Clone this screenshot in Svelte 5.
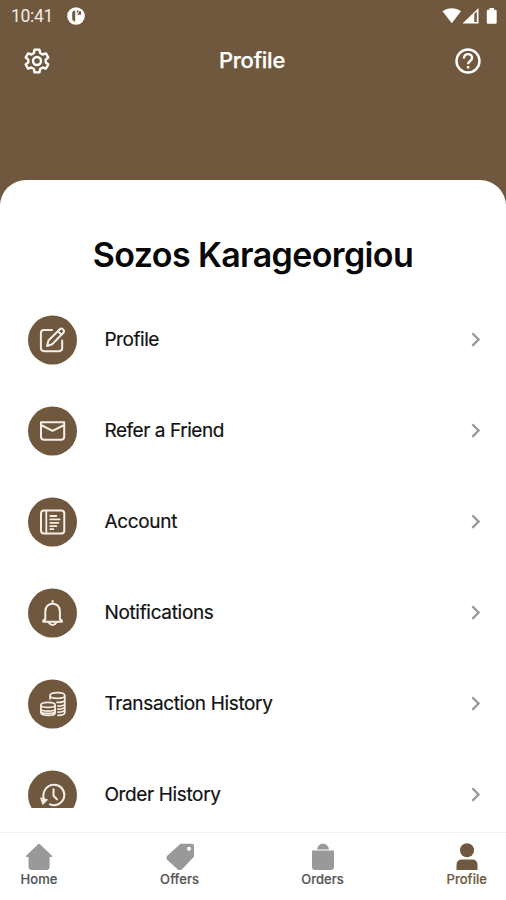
<script>
  const rows = [
    { label: 'Profile', icon: 'edit', width: 55 },
    { label: 'Refer a Friend', icon: 'mail', width: 120 },
    { label: 'Account', icon: 'account', width: 73 },
    { label: 'Notifications', icon: 'bell', width: 109.5 },
    { label: 'Transaction History', icon: 'coins', width: 168.5 },
    { label: 'Order History', icon: 'history', width: 116.5 }
  ];
  const tabs = ['Home', 'Offers', 'Orders', 'Profile'];
</script>

<div class="screen">
  <header>
    <div class="status">
      <span class="time">10:41</span>
      <svg class="app" width="18" height="18" viewBox="0 0 18 18">
        <circle cx="9" cy="9" r="8.8" fill="#fff" />
        <path d="M8.200 3.400v11.200q-3-.4-3-3V6.400q0-2.800 3-3z" fill="#70583e" />
        <path d="M9.800 3.600h1.700v1.800H9.800zM12 4.200h2v3.500h-3.300V6.200H12z" fill="#70583e" />
      </svg>
      <svg class="signals" width="56" height="18" viewBox="0 0 56 18" fill="#fff">
        <path d="M.5 4.300C6 .2 13.500 .2 19 4.300L9.800 16.200z" />
        <path fill-rule="evenodd" d="M36.500 1v15.600H20.500zM32.300 6.800v8.300h2.500V4.500z" />
        <path d="M47.500 1h4.500v1.700h1.500q1.200 0 1.200 1.200v11.600q0 1.200-1.200 1.200H46q-1.200 0-1.200-1.200V3.900q0-1.200 1.200-1.200h1.500z" />
      </svg>
    </div>
    <div class="bar">
      <svg width="26" height="26" viewBox="0 0 26 26" fill="none" stroke="#fff" stroke-width="2.400" stroke-linejoin="round">
        <path d="M10.600 1.600h4.800l.7 3.400 2.500 1.500 3.300-1.100 2.400 4.100-2.600 2.200v2.600l2.600 2.200-2.400 4.100-3.300-1.100-2.500 1.500-.7 3.400h-4.800L9.900 21l-2.500-1.500-3.300 1.100-2.400-4.100 2.600-2.200v-2.600L1.700 9.500l2.400-4.100 3.300 1.100L9.900 5z" />
        <circle cx="13" cy="13" r="4" />
      </svg>
      <h1>Profile</h1>
      <svg width="26" height="26" viewBox="0 0 26 26" fill="none" stroke="#fff" stroke-width="2.400">
        <circle cx="13" cy="13" r="11.500" />
        <path d="M8.900 10.500C8.900 4.500 17.300 4.900 17.100 10c-.1 2.900-4 3.200-4 6.300M13.100 18v2.400" />
      </svg>
    </div>
  </header>

  <main>
    <h2>Sozos Karageorgiou</h2>
    <ul>
      {#each rows as row}
        <li>
          <svg class="badge" width="49" height="50" viewBox="0 -.5 49 50" fill="none" stroke="#f5eee6" stroke-width="2" stroke-linecap="round" stroke-linejoin="round">
            <circle cx="24.500" cy="24.500" r="24.500" fill="#70583e" stroke="none" />
            {#if row.icon === 'edit'}
              <path d="M24 14.500h-8q-3.100 0-3.100 3.100v15q0 3.100 3.100 3.100h15q3.200 0 3.200-3.100V25" />
              <path d="M19 30.500l1.500-5.500L31.800 13.700q1.500-1.400 3.300.2 1.700 1.800.3 3.300L24.200 28.700zM29.800 15.700l3.800 3.600" />
            {:else if row.icon === 'mail'}
              <path d="M13 15.800h23.200v14.400q0 3.100-3.100 3.100h-17q-3.100 0-3.100-3.100zM13 18.500l11.600 5.800 11.600-5.800" />
            {:else if row.icon === 'account'}
              <rect x="13" y="13" width="23.300" height="23" rx="3" />
              <path d="M18.300 13v23M22.300 18.500h6M22.300 21.900h9.200M22.300 25.300h8M22.300 28.700h6M22.300 31.700h3" stroke-width="1.800" />
            {:else if row.icon === 'bell'}
              <path d="M24.600 12.500v2.500M17.300 31v-8c0-10.500 14.600-10.500 14.600 0v8q2.100 .3 2.100 2.300H15.200q0-2 2.100-2.300z" />
              <path d="M20.800 34q1.500 2.500 3.800 2.500t3.800-2.500" />
            {:else if row.icon === 'coins'}
              <g stroke-width="1.700">
                <path d="M22 19.500v-3.200c0-4.200 14.800-4.200 14.800 0v16.400c0 2-2.500 3.100-6.800 3.100M22 16.300c0 3.400 14.800 3.400 14.800 0M36.800 20.200c0 2-3.200 3-7.800 2.700M36.800 24c0 1.700-2.500 2.600-6.800 2.600M36.800 27c0 1.700-2.500 2.600-6.800 2.600M36.800 30c0 1.700-2.500 2.600-6.800 2.600" />
                <path d="M12.900 25.700c0-3.900 14.300-3.900 14.300 0v7.500c0 3.600-14.300 3.600-14.300 0zM12.900 25.700c0 2.800 14.300 2.800 14.300 0M12.900 29.500c0 2.800 14.300 2.800 14.300 0M12.900 32c0 2.500 14.300 2.500 14.300 0" />
              </g>
            {:else}
              <path d="M16 29C13.400 21.400 19 14.200 26 14.200c6 0 10.300 4.600 10.300 10.300 0 7.200-7.300 12.200-14.300 9.300M25.500 18.800v6.400l3.400 3.600" />
              <path d="M13 27.500l6.500 1.700-4.400 4.500z" fill="#f5eee6" stroke-width="1" />
            {/if}
          </svg>
          <span class="label"><svg class="line" width={row.width + 2} height="28"><text x="0.4" y="19.500" textLength={row.width}>{row.label}</text></svg></span>
          <svg class="chevron" width="10" height="16" viewBox="0 0 10 16" fill="none" stroke="#999" stroke-width="2.300">
            <path d="M1.300 1.300L7.600 7.600l-6.300 6.300" />
          </svg>
        </li>
      {/each}
    </ul>
  </main>

  <nav>
    {#each tabs as tab, i}
      <div class="tab" class:active={i === 3}>
        <svg width="28" height="28" viewBox="0 0 28 28" fill="currentColor">
          {#if i === 0}
            <path d="M14 .8q.5 0 1 .5l12 11.500q.7 1-.4 1.300h-2v9.400q0 3.500-3.500 3.500H7q-3.500 0-3.500-3.500v-9.400h-2q-1.100-.3-.4-1.300L13 1.300q.5-.5 1-.5z" />
          {:else if i === 1}
            <path fill-rule="evenodd" d="M14.500 .7H26q2 0 2 2v11L16 26.200q-2.500 1.700-4.500 0L1.300 17q-1.800-2.200 0-4.300zM23 3.700a2 2 0 1 0 0 4 2 2 0 0 0 0-4z" />
          {:else if i === 2}
            <path d="M8 6.500C9-1.200 19-1.200 20 6.500z" />
            <path d="M3 7.600h22v16.200q0 3.200-3.200 3.200H6.200Q3 27 3 23.800z" />
          {:else}
            <circle cx="14" cy="7.300" r="7" />
            <path d="M3.500 27v-5q0-5.500 5.500-5.500h10q5.500 0 5.500 5.500v5z" />
          {/if}
        </svg>
        <span>{tab}</span>
      </div>
    {/each}
  </nav>
</div>

<style>
  .screen { width: 506px; height: 900px; background: #fff; overflow: hidden; display: flex; flex-direction: column; font-family: Inter, Roboto, sans-serif; color: #080808; }
  header { height: 204px; flex: none; background: #70583e; color: #fff; }
  .status { height: 31px; box-sizing: border-box; padding: 0 8px 0 11px; display: flex; align-items: center; font: 17.500px/30px Roboto, sans-serif; }
  .time { width: 42px; color: #f1eae2; white-space: nowrap; letter-spacing: -.3px; }
  .app { margin-left: 14px; }
  .signals { margin-left: auto; }
  .bar { height: 60px; padding: 0 25px 0 24px; display: flex; justify-content: space-between; align-items: center; }
  h1 { margin: 0 1px 2px 0; font: 500 22px/28px Inter, sans-serif; letter-spacing: -.25px; -webkit-text-stroke: .25px #fff; }
  main { height: 652px; flex: none; margin-top: -24px; background: #fff; border-radius: 26px 26px 0 0; overflow: hidden; }
  h2 { margin: 54px 0 0; text-align: center; font: 600 34px/42px Inter, sans-serif; letter-spacing: -.62px; white-space: nowrap; }
  ul { list-style: none; padding: 0; margin: 18px 0 0; height: 514px; }
  li { height: 91.100px; display: flex; align-items: center; padding: 0 25px 0 28px; }
  .badge { flex: none; }
  li:last-child .badge { clip-path: inset(0 0 12px 0); }
  .label { margin-left: 27px; flex: 1; }
  .line { display: block; overflow: visible; font: 400 19px Inter, sans-serif; fill: #111; stroke: #111; stroke-width: .2px; }
  nav { height: 68px; box-sizing: border-box; flex: none; border-top: 1px solid #f1f1f1; display: flex; justify-content: space-between; background: #fff; padding: 10px 19px 0; }
  .tab { display: flex; flex-direction: column; align-items: center; color: #999; min-width: 40px; }
  .tab:nth-child(2), .tab:nth-child(3) { margin-left: -1px; margin-right: 1px; }
  .tab span { color: #555; font: 500 13px/16px Inter, sans-serif; letter-spacing: .05px; -webkit-text-stroke: .2px currentColor; }
  .tab.active, .tab.active span { color: #70583e; }
</style>
